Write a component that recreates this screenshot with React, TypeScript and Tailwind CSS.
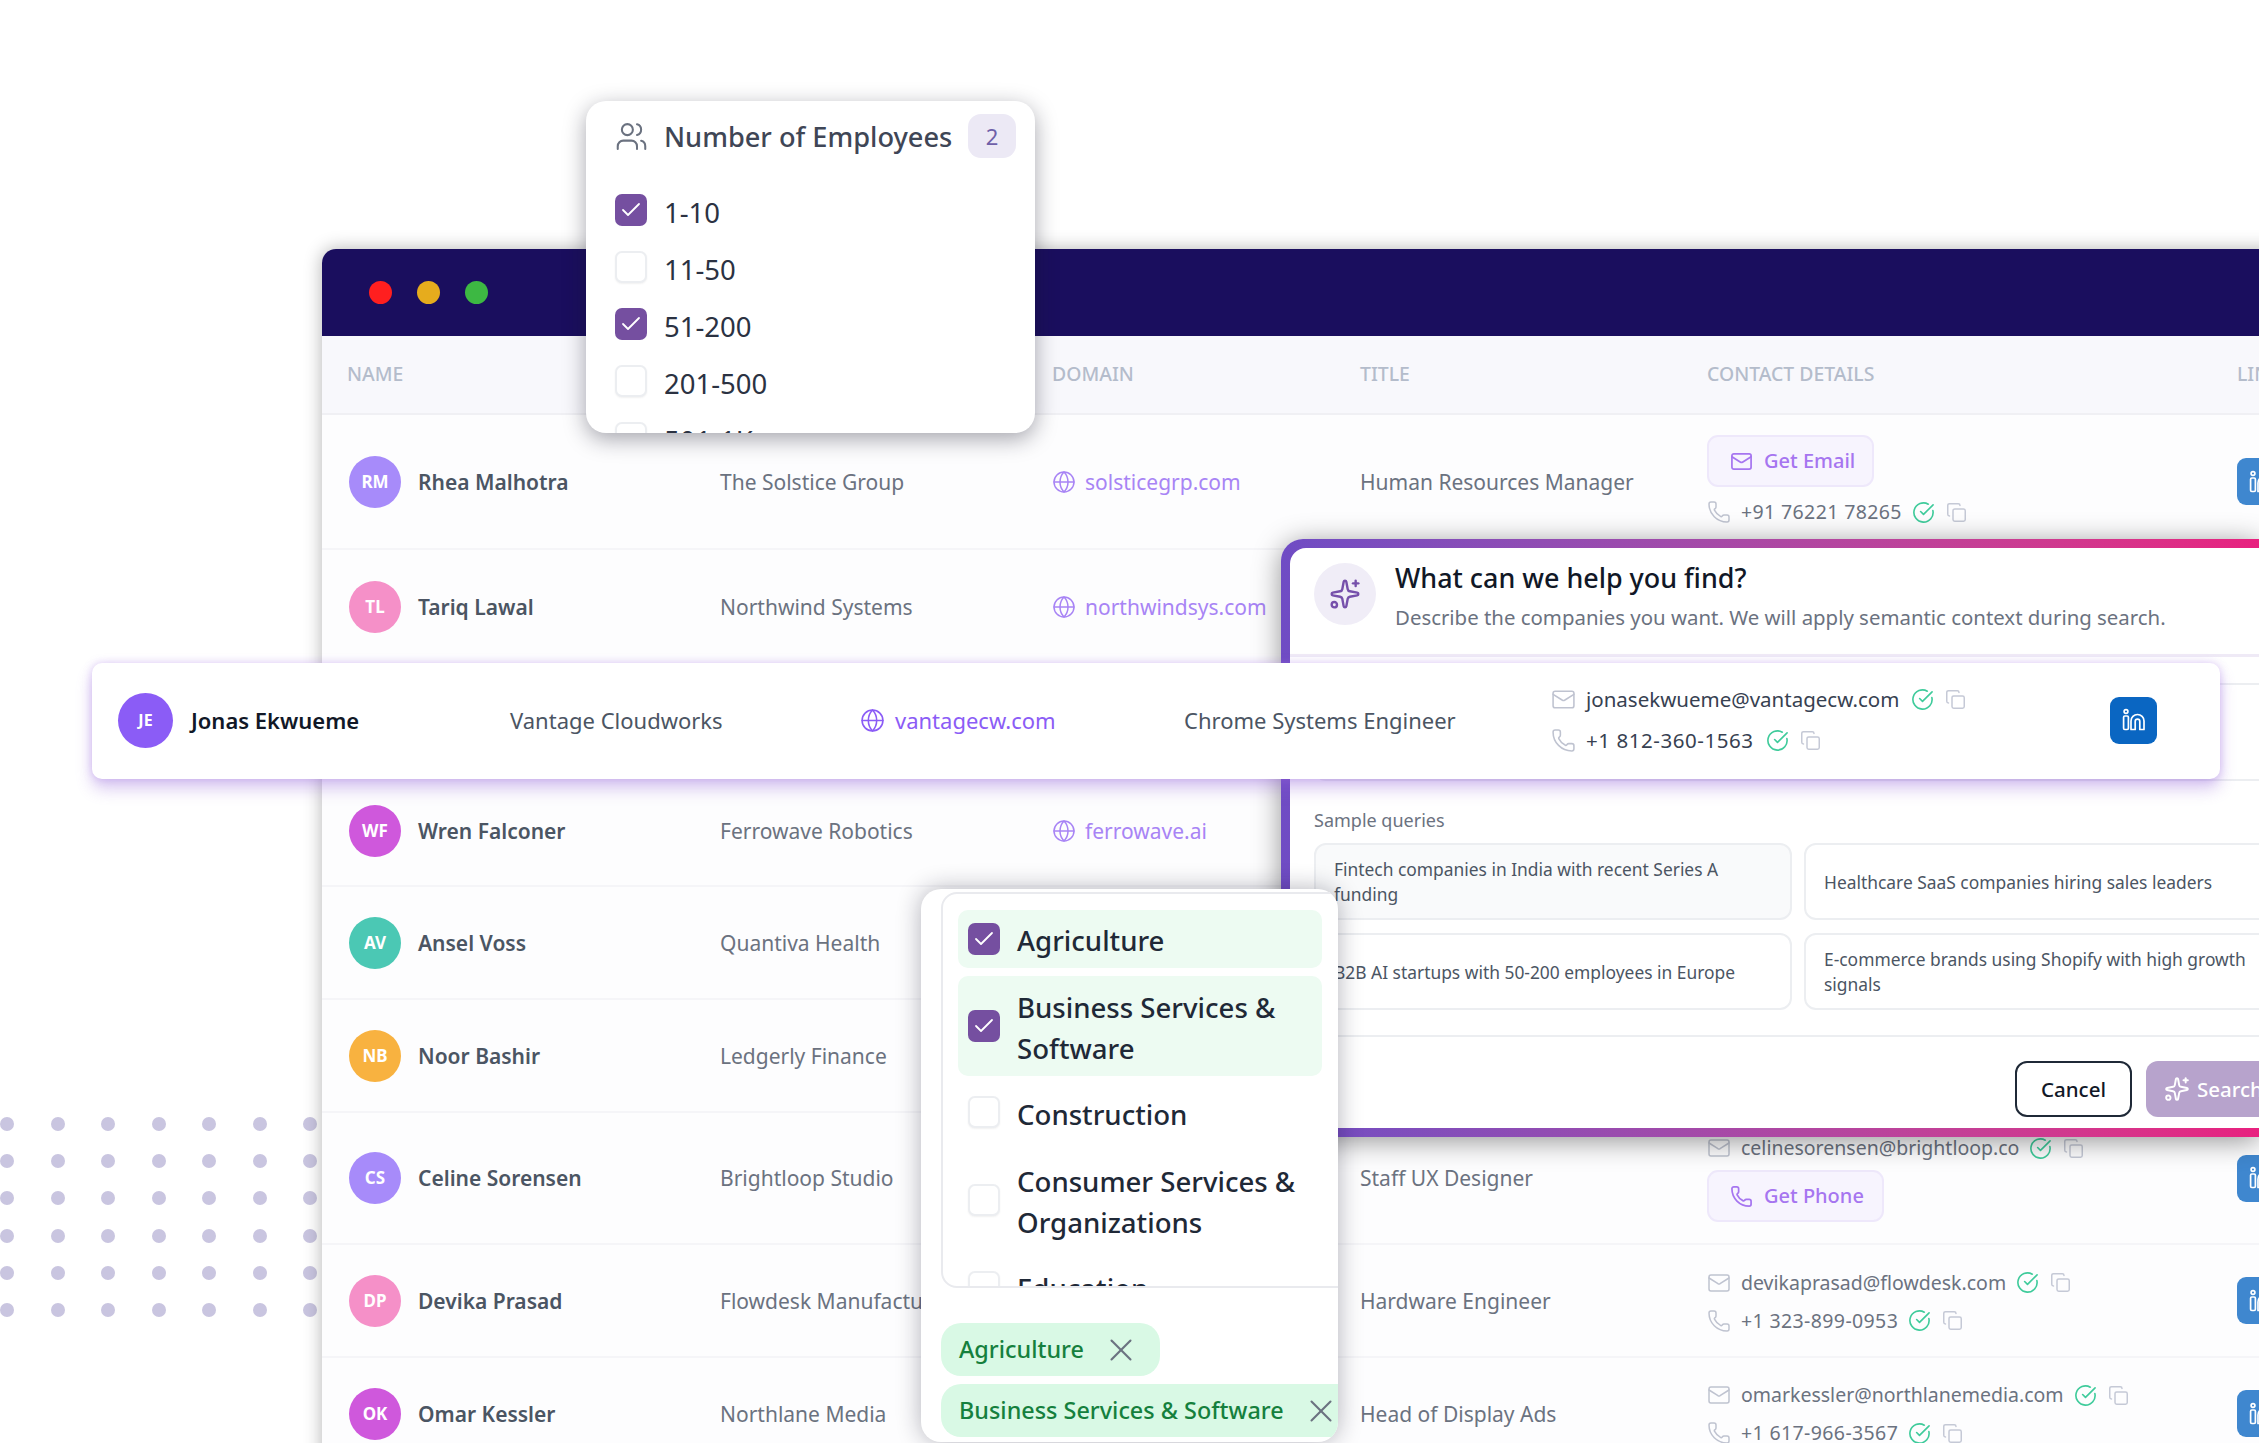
import React from "react";
import { Users, Check, Globe, Mail, Phone, CircleCheckBig, Copy, X, Sparkles } from "lucide-react";

const FONT = "[font-family:'Noto_Sans',sans-serif]";

function LinkedIn({ dim }: { dim?: boolean }) {
  return (
    <div className={`flex h-[47px] w-[47px] items-center justify-center rounded-[9px] ${dim ? "bg-[#3f87cf]" : "bg-[#0a66c2]"}`}>
      <svg width="28" height="28" viewBox="0 0 28 28" fill="none" stroke="white" strokeWidth="1.7" strokeLinejoin="round">
        <circle cx="6" cy="5.5" r="1.9" />
        <rect x="3.6" y="10" width="4.8" height="13.5" rx="1.2" />
        <path d="M11 23.5V15a6.5 6.5 0 0 1 13 0v8.5h-4.2V15.5a2.3 2.3 0 0 0-4.6 0v8h-4.2z" />
      </svg>
    </div>
  );
}

function Avatar({ text, color, big }: { text: string; color: string; big?: boolean }) {
  return (
    <div className={`flex shrink-0 items-center justify-center rounded-full font-bold text-white ${color} ${big ? "h-[55px] w-[55px] text-[16px]" : "h-[52px] w-[52px] text-[17px]"}`}>
      {text}
    </div>
  );
}

function ContactLine({ kind, value, big }: { kind: "mail" | "phone"; value: string; big?: boolean }) {
  const Icon = kind === "mail" ? Mail : Phone;
  const track = kind === "phone" ? (big ? "tracking-[0.55px]" : "tracking-[0.38px]") : "";
  return (
    <div className={`flex h-[28px] items-center ${big ? "text-[20.5px] text-[#374151]" : "text-[19.5px] text-[#6b7280]"}`}>
      <Icon className={`shrink-0 text-[#bfc3d0] ${big ? "mr-[10px] h-[25px] w-[25px]" : "mr-[10px] h-[24px] w-[24px]"}`} strokeWidth={1.5} />
      <span className={`whitespace-nowrap ${track}`}>{value}</span>
      <CircleCheckBig className={`${big ? "ml-[12px]" : "ml-[10px]"} h-[23px] w-[23px] shrink-0 text-[#3fcb9b]`} strokeWidth={1.7} />
      <Copy className="ml-[11px] h-[21px] w-[21px] shrink-0 text-[#c5c9d6]" strokeWidth={1.7} />
    </div>
  );
}

function GetButton({ kind }: { kind: "mail" | "phone" }) {
  const Icon = kind === "mail" ? Mail : Phone;
  return (
    <div className={`flex h-[52px] items-center gap-[11px] rounded-[11px] border-2 border-[#eee8fb] bg-[#f7f4fe] text-[20px] font-medium text-[#a675f0] ${kind === "mail" ? "w-[167px] pl-[21px]" : "w-[177px] pl-[21px]"}`}>
      <Icon className="h-[23px] w-[23px] shrink-0" strokeWidth={1.8} />
      <span className="whitespace-nowrap">{kind === "mail" ? "Get Email" : "Get Phone"}</span>
    </div>
  );
}

type Row = {
  h: string;
  initials: string;
  color: string;
  name: string;
  company: string;
  domain: string;
  title: string;
  contact: React.ReactNode;
};

const rows: Row[] = [
  {
    h: "h-[135px]", initials: "RM", color: "bg-[#a78bfa]", name: "Rhea Malhotra", company: "The Solstice Group", domain: "solsticegrp.com", title: "Human Resources Manager",
    contact: (
      <div className="mb-[2px] flex flex-col gap-[11px]">
        <GetButton kind="mail" />
        <ContactLine kind="phone" value="+91 76221 78265" />
      </div>
    ),
  },
  { h: "h-[115px]", initials: "TL", color: "bg-[#f590c8]", name: "Tariq Lawal", company: "Northwind Systems", domain: "northwindsys.com", title: "Sales Director", contact: <ContactLine kind="phone" value="+1 415-220-7781" /> },
  { h: "h-[112px]", initials: "JE", color: "bg-[#8b5cf6]", name: "Jonas Ekwueme", company: "Vantage Cloudworks", domain: "vantagecw.com", title: "Chrome Systems Engineer", contact: <ContactLine kind="phone" value="+1 812-360-1563" /> },
  { h: "h-[110px]", initials: "WF", color: "bg-[#cf58dc]", name: "Wren Falconer", company: "Ferrowave Robotics", domain: "ferrowave.ai", title: "Robotics Lead", contact: <ContactLine kind="phone" value="+1 206-555-0148" /> },
  { h: "h-[113px]", initials: "AV", color: "bg-[#4bc8b4]", name: "Ansel Voss", company: "Quantiva Health", domain: "quantiva.health", title: "Product Manager", contact: <ContactLine kind="phone" value="+1 312-555-0172" /> },
  { h: "h-[113px]", initials: "NB", color: "bg-[#f8b240]", name: "Noor Bashir", company: "Ledgerly Finance", domain: "ledgerly.io", title: "Finance Manager", contact: <ContactLine kind="phone" value="+1 646-555-0119" /> },
  {
    h: "h-[132px]", initials: "CS", color: "bg-[#a78bfa]", name: "Celine Sorensen", company: "Brightloop Studio", domain: "brightloop.co", title: "Staff UX Designer",
    contact: (
      <div className="flex flex-col gap-[8px]">
        <ContactLine kind="mail" value="celinesorensen@brightloop.co" />
        <GetButton kind="phone" />
      </div>
    ),
  },
  {
    h: "h-[113px]", initials: "DP", color: "bg-[#f590c8]", name: "Devika Prasad", company: "Flowdesk Manufacturing", domain: "flowdesk.com", title: "Hardware Engineer",
    contact: (
      <div className="mt-[2px] flex flex-col gap-[10px]">
        <ContactLine kind="mail" value="devikaprasad@flowdesk.com" />
        <ContactLine kind="phone" value="+1 323-899-0953" />
      </div>
    ),
  },
  {
    h: "h-[113px]", initials: "OK", color: "bg-[#cf58dc]", name: "Omar Kessler", company: "Northlane Media", domain: "northlanemedia.com", title: "Head of Display Ads",
    contact: (
      <div className="mt-[1px] flex flex-col gap-[10px]">
        <ContactLine kind="mail" value="omarkessler@northlanemedia.com" />
        <ContactLine kind="phone" value="+1 617-966-3567" />
      </div>
    ),
  },
];

const COLS = "grid grid-cols-[398px_332px_308px_347px_530px_100px]";

function Window() {
  return (
    <div className="ml-[322px] w-[2015px] overflow-hidden rounded-tl-[14px] bg-white shadow-[0_0_18px_rgba(0,0,0,0.3)]">
      <div className="flex h-[87px] items-center gap-[25px] bg-[#1a0e5e] pl-[47px]">
        <div className="h-[23px] w-[23px] rounded-full bg-[#ff1f1f]" />
        <div className="h-[23px] w-[23px] rounded-full bg-[#e6ac1d]" />
        <div className="h-[23px] w-[23px] rounded-full bg-[#3db843]" />
      </div>
      <div className={`${COLS} h-[79px] items-center border-b-2 border-[#f0f0f4] bg-[#f8f8fc] pb-[1px] text-[19.4px] font-medium text-[#b4bccb]`}>
        <div className="pl-[25px]">NAME</div>
        <div>COMPANY</div>
        <div>DOMAIN</div>
        <div>TITLE</div>
        <div>CONTACT DETAILS</div>
        <div>LINKEDIN</div>
      </div>
      {rows.map((r) => (
        <div key={r.name} className={`${COLS} ${r.h} items-center border-b-2 border-[#f5f5f8] bg-[#fdfdfe] text-[21px] text-[#6b7280]`}>
          <div className="flex items-center gap-[17px] pl-[27px]">
            <Avatar text={r.initials} color={r.color} />
            <span className="pt-[2px] font-semibold text-[#4b5563]">{r.name}</span>
          </div>
          <div className="whitespace-nowrap pt-[2px]">{r.company}</div>
          <div className="flex items-center gap-[9px] text-[#a884f5]">
            <Globe className="h-[24px] w-[24px]" strokeWidth={1.5} />
            <span className="pt-[2px]">{r.domain}</span>
          </div>
          <div className="whitespace-nowrap pt-[2px]">{r.title}</div>
          <div>{r.contact}</div>
          <div><LinkedIn dim /></div>
        </div>
      ))}
    </div>
  );
}

function Box({ on }: { on: boolean }) {
  return on ? (
    <div className="flex h-[32px] w-[32px] shrink-0 items-center justify-center rounded-[7px] bg-[#754fa0]">
      <Check className="h-[24px] w-[24px] text-white" strokeWidth={1.8} />
    </div>
  ) : (
    <div className="h-[32px] w-[32px] shrink-0 rounded-[7px] border-2 border-[#eceef1] bg-white shadow-[0_1px_2px_rgba(0,0,0,0.06)]" />
  );
}

function EmployeesPopup() {
  const items: [string, boolean][] = [["1-10", true], ["11-50", false], ["51-200", true], ["201-500", false], ["501-1K", false]];
  return (
    <div className="absolute left-[586px] top-[101px] h-[332px] w-[449px] overflow-hidden rounded-[20px] bg-white pl-[29px] pr-[19px] shadow-[0_6px_22px_rgba(20,20,40,0.38)]">
      <div className="flex h-[93px] items-start pt-[13px]">
        <div className="flex h-[44px] items-center">
          <Users className="h-[33px] w-[33px] text-[#6b7280]" strokeWidth={1.5} />
          <span className="ml-[16px] whitespace-nowrap pt-[3px] text-[27.2px] font-medium text-[#3f4656]">Number of Employees</span>
        </div>
        <div className="ml-auto flex h-[44px] w-[48px] items-center justify-center rounded-[13px] bg-[#ece9f5] text-[22px] text-[#6f60a8]">2</div>
      </div>
      {items.map(([t, on]) => (
        <div key={t} className="flex h-[57px] items-start">
          <Box on={on} />
          <span className="ml-[17px] pt-[1px] text-[27.5px] leading-[36px] text-[#2b3242]">{t}</span>
        </div>
      ))}
    </div>
  );
}

function Tag({ text, w }: { text: string; w: string }) {
  return (
    <div className={`flex h-[53px] shrink-0 items-center rounded-[20px] bg-[#d9f9e5] pl-[18px] text-[23.4px] font-medium text-[#15803d] ${w}`}>
      <span className="whitespace-nowrap">{text}</span>
      <X className="ml-[18px] h-[38px] w-[38px] shrink-0 text-[#6b7280]" strokeWidth={1.3} />
    </div>
  );
}

function IndustryPopup() {
  const items: { t: string; on: boolean; h: string; mb: string; tp: string }[] = [
    { t: "Agriculture", on: true, h: "h-[58px]", mb: "mb-[8px]", tp: "pt-[3px]" },
    { t: "Business Services & Software", on: true, h: "h-[100px]", mb: "mb-[8px]", tp: "pt-[3px]" },
    { t: "Construction", on: false, h: "h-[56px]", mb: "mb-[10px]", tp: "pt-[4px]" },
    { t: "Consumer Services & Organizations", on: false, h: "h-[100px]", mb: "mb-[8px]", tp: "pt-[3px]" },
    { t: "Education", on: false, h: "h-[58px]", mb: "mb-[8px]", tp: "pt-[3px]" },
  ];
  return (
    <div className="absolute left-[921px] top-[889px] h-[553px] w-[417px] overflow-hidden rounded-[20px] bg-white pl-[20px] shadow-[0_0_24px_rgba(20,20,40,0.32)]">
      <div className="mt-[3px] h-[396px] w-[420px] overflow-hidden rounded-bl-[16px] rounded-tl-[16px] border-2 border-[#e9eaee] pl-[15px] pr-[37px] pt-[16px]">
        {items.map((i) => (
          <div key={i.t} className={`flex items-center rounded-[10px] pl-[10px] pr-[10px] ${i.h} ${i.mb} ${i.on ? "bg-[#edfbf2]" : ""}`}>
            <Box on={i.on} />
            <span className={`ml-[17px] text-[27.6px] font-medium leading-[41px] text-[#1f2937] ${i.tp}`}>{i.t}</span>
          </div>
        ))}
      </div>
      <div className="flex flex-col gap-[8px] pt-[35px]">
        <Tag text="Agriculture" w="w-[219px]" />
        <Tag text="Business Services & Software" w="w-[420px]" />
      </div>
    </div>
  );
}

function Modal() {
  const q: { t: string; bg: string }[] = [
    { t: "Fintech companies in India with recent Series A funding", bg: "bg-[#f9fafb]" },
    { t: "Healthcare SaaS companies hiring sales leaders", bg: "bg-white" },
    { t: "B2B AI startups with 50-200 employees in Europe", bg: "bg-white" },
    { t: "E-commerce brands using Shopify with high growth signals", bg: "bg-white" },
  ];
  return (
    <div className="absolute left-[1281px] top-[539px] w-[978px] rounded-l-[22px] bg-gradient-to-r from-[#6f4cc4] to-[#e8207f] py-[9px] pl-[9px] shadow-[0_4px_28px_rgba(0,0,0,0.42)]">
      <div className="h-[580px] overflow-hidden rounded-tl-[16px] rounded-bl-[2px] bg-white">
        <div className="flex h-[109px] border-b-[3px] border-[#efeaf6] pl-[24px] pt-[15px]">
          <div className="flex h-[62px] w-[62px] shrink-0 items-center justify-center rounded-full bg-[#f0edf7]">
            <Sparkles className="h-[32px] w-[32px] text-[#7650ab]" strokeWidth={1.8} />
          </div>
          <div className="-mt-[4px] ml-[19px]">
            <div className="text-[26.9px] font-medium leading-[38px] text-[#111827]">What can we help you find?</div>
            <div className="mt-[5px] whitespace-nowrap text-[20.4px] leading-[30px] text-[#6b7280]">Describe the companies you want. We will apply semantic context during search.</div>
          </div>
        </div>
        <div className="pl-[24px]">
          <div className="mt-[26px] h-[98px] w-[1000px] rounded-[12px] border-2 border-[#eceef1]" />
          <div className="mt-[25px] text-[18px] leading-[28px] text-[#6b7280]">Sample queries</div>
          <div className="mt-[9px] grid w-[968px] grid-cols-2 gap-x-[12px] gap-y-[13px]">
            {q.map((c) => (
              <div key={c.t} className={`flex h-[77px] items-center rounded-[12px] border-2 border-[#eceef1] pl-[18px] pr-[16px] pt-[1px] text-[17.4px] leading-[25px] text-[#4b5563] ${c.bg}`}>
                {c.t}
              </div>
            ))}
          </div>
        </div>
        <div className="mt-[25px] flex h-[93px] gap-[14px] border-t-2 border-[#eceef1] pl-[725px] pt-[24px]">
          <div className="flex h-[56px] w-[117px] shrink-0 items-center justify-center rounded-[12px] border-2 border-[#1f2937] text-[20.5px] font-medium text-[#111827]">Cancel</div>
          <div className="flex h-[56px] w-[180px] shrink-0 items-center justify-start gap-[7px] rounded-[12px] bg-[#b7a3cc] pl-[18px] text-[20.5px] font-medium text-white">
            <Sparkles className="h-[26px] w-[26px] shrink-0" strokeWidth={1.8} />
            <span>Search</span>
          </div>
        </div>
      </div>
    </div>
  );
}

function JonasCard() {
  return (
    <div className="absolute left-[92px] top-[663px] grid h-[116px] w-[2128px] grid-cols-[392px_376px_324px_367px_559px_100px] items-center rounded-[10px] bg-white pb-[2px] text-[22px] text-[#4b5563] shadow-[0_10px_16px_rgba(140,90,215,0.32),0_0_8px_rgba(160,110,230,0.35)]">
      <div className="flex items-center gap-[18px] pl-[26px]">
        <Avatar text="JE" color="bg-[#8b5cf6]" big />
        <span className="font-semibold text-[#111827]">Jonas Ekwueme</span>
      </div>
      <div className="pl-[26px]">Vantage Cloudworks</div>
      <div className="flex items-center gap-[10px] text-[#8b5cf6]">
        <Globe className="h-[25px] w-[25px]" strokeWidth={1.5} />
        <span>vantagecw.com</span>
      </div>
      <div className="whitespace-nowrap">Chrome Systems Engineer</div>
      <div className="flex flex-col gap-[13px]">
        <ContactLine kind="mail" value="jonasekwueme@vantagecw.com" big />
        <ContactLine kind="phone" value="+1 812-360-1563" big />
      </div>
      <div><LinkedIn /></div>
    </div>
  );
}

function Dots() {
  return (
    <div className="absolute left-0 top-[1117px] grid grid-cols-[repeat(7,14px)] gap-x-[36.5px] gap-y-[23.2px]">
      {Array.from({ length: 42 }).map((_, i) => (
        <div key={i} className="h-[14px] w-[14px] rounded-full bg-[#c9c5e0]" />
      ))}
    </div>
  );
}

export default function App() {
  return (
    <div className={`relative h-[1443px] w-[2259px] overflow-hidden bg-white pt-[249px] ${FONT}`}>
      <Dots />
      <div className="relative">
        <Window />
      </div>
      <EmployeesPopup />
      <Modal />
      <IndustryPopup />
      <JonasCard />
    </div>
  );
}
